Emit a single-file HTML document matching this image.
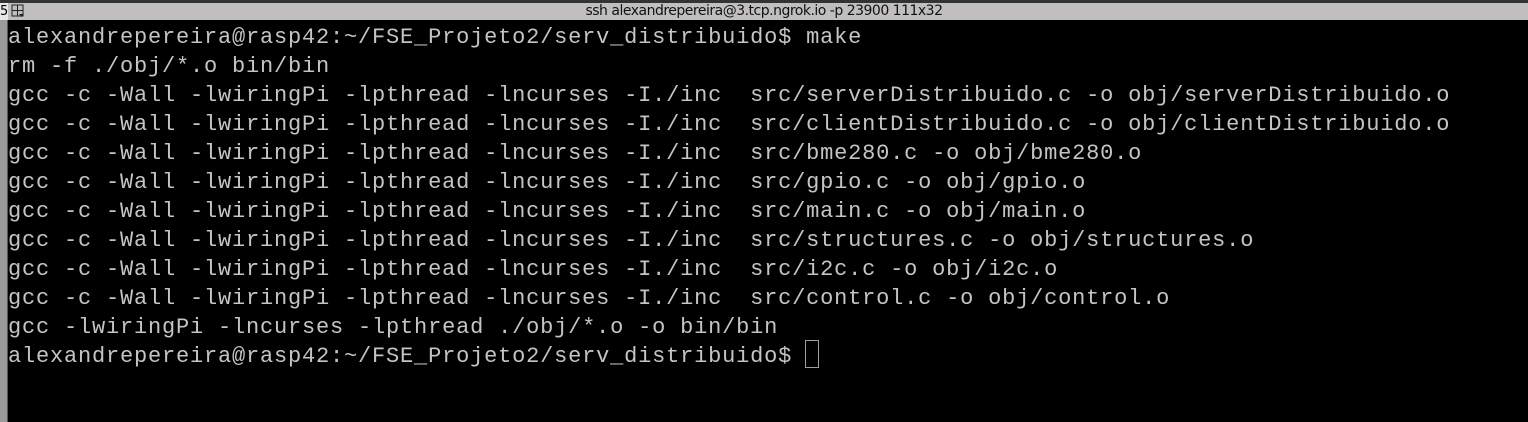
<!DOCTYPE html>
<html><head><meta charset="utf-8"><style>
html,body{margin:0;padding:0;width:1528px;height:422px;overflow:hidden;background:#000;}
.top{position:absolute;left:0;top:0;width:1528px;height:3px;background:#333;}
.bar{position:absolute;left:0;top:3px;width:1528px;height:17px;background:#c0bebe;}
.title{position:absolute;left:0;width:1528px;top:3px;height:17px;line-height:17px;text-align:center;font:14px "DejaVu Sans","Liberation Sans",sans-serif;color:#111;letter-spacing:-0.5px;}
.left{position:absolute;left:0;top:20px;width:7px;height:402px;background:#9a9a9a;border-right:1px solid #555;}
.five{position:absolute;left:0;top:3px;width:8px;height:17px;background:#e8e8e8;font:13px "DejaVu Sans",sans-serif;line-height:17px;color:#000;overflow:hidden;}
.icon{position:absolute;left:11px;top:4px;width:14px;height:14px;}
pre{position:absolute;left:8px;top:23px;margin:0;font-family:"Liberation Mono",monospace;font-size:22px;letter-spacing:0.8px;line-height:29px;color:#c4c4c4;}
.cur{position:absolute;left:805px;top:340px;width:14px;height:28px;border:1px solid #a0a0a0;box-sizing:border-box;}
</style></head><body>
<div class="top"></div><div class="bar"></div>
<div class="five">5</div>
<svg class="icon" viewBox="0 0 14 14"><rect x="1" y="1" width="11" height="11" fill="none" stroke="#222"/><line x1="6.5" y1="1" x2="6.5" y2="12" stroke="#222"/><line x1="1" y1="6.5" x2="12" y2="6.5" stroke="#222"/><path d="M8 10h5l-2.5 3z" fill="#222"/></svg>
<div class="title">ssh alexandrepereira@3.tcp.ngrok.io -p 23900 111x32</div>
<div class="left"></div>
<pre>alexandrepereira@rasp42:~/FSE_Projeto2/serv_distribuido$ make
rm -f ./obj/*.o bin/bin
gcc -c -Wall -lwiringPi -lpthread -lncurses -I./inc  src/serverDistribuido.c -o obj/serverDistribuido.o
gcc -c -Wall -lwiringPi -lpthread -lncurses -I./inc  src/clientDistribuido.c -o obj/clientDistribuido.o
gcc -c -Wall -lwiringPi -lpthread -lncurses -I./inc  src/bme280.c -o obj/bme280.o
gcc -c -Wall -lwiringPi -lpthread -lncurses -I./inc  src/gpio.c -o obj/gpio.o
gcc -c -Wall -lwiringPi -lpthread -lncurses -I./inc  src/main.c -o obj/main.o
gcc -c -Wall -lwiringPi -lpthread -lncurses -I./inc  src/structures.c -o obj/structures.o
gcc -c -Wall -lwiringPi -lpthread -lncurses -I./inc  src/i2c.c -o obj/i2c.o
gcc -c -Wall -lwiringPi -lpthread -lncurses -I./inc  src/control.c -o obj/control.o
gcc -lwiringPi -lncurses -lpthread ./obj/*.o -o bin/bin
alexandrepereira@rasp42:~/FSE_Projeto2/serv_distribuido$ </pre>
<div class="cur"></div>
</body></html>
